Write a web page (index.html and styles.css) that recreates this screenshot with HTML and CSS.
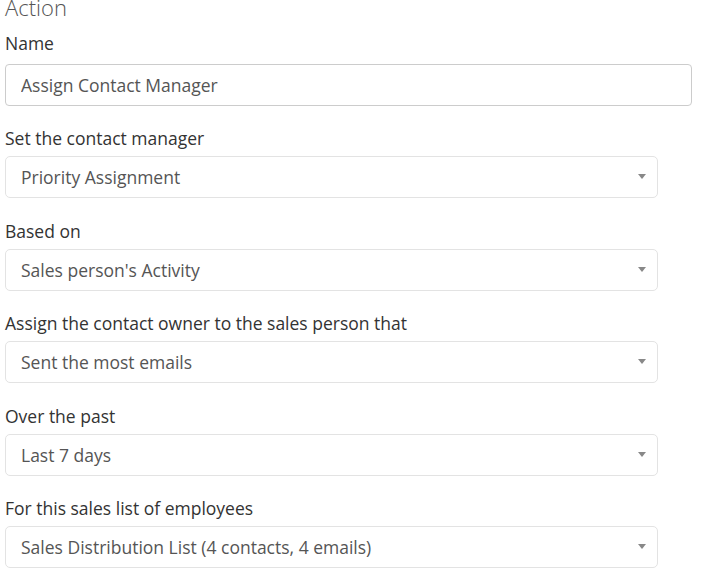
FILE: index.html
```html
<!DOCTYPE html>
<html lang="en">
<head>
  <meta charset="UTF-8" />
  <title>Action</title>
  <link rel="stylesheet" href="styles.css">
</head>
<body>

  <div class="action-form">
    <h3>Action</h3>

    <div class="field">
      <label for="name">Name</label>
      <input id="name" type="text" value="Assign Contact Manager" />
    </div>

    <div class="field">
      <label for="manager">Set the contact manager</label>
      <div class="select-wrap">
        <select id="manager">
          <option>Priority Assignment</option>
        </select>
        <span class="caret"></span>
      </div>
    </div>

    <div class="field">
      <label for="based">Based on</label>
      <div class="select-wrap">
        <select id="based">
          <option>Sales person's Activity</option>
        </select>
        <span class="caret"></span>
      </div>
    </div>

    <div class="field">
      <label for="owner">Assign the contact owner to the sales person that</label>
      <div class="select-wrap">
        <select id="owner">
          <option>Sent the most emails</option>
        </select>
        <span class="caret"></span>
      </div>
    </div>

    <div class="field">
      <label for="period">Over the past</label>
      <div class="select-wrap">
        <select id="period">
          <option>Last 7 days</option>
        </select>
        <span class="caret"></span>
      </div>
    </div>

    <div class="field">
      <label for="list">For this sales list of employees</label>
      <div class="select-wrap">
        <select id="list">
          <option>Sales Distribution List (4 contacts, 4 emails)</option>
        </select>
        <span class="caret"></span>
      </div>
    </div>
  </div>

</body>
</html>
```

FILE: styles.css
```css
body {
  margin: 0;
  background: #fff;
  font-family: 'Open Sans', sans-serif;
  color: #333;
  overflow: hidden;
}

.action-form {
  padding-left: 5px;
}

.action-form h3 {
  margin: -5px 0 12.5px;
  font-size: 22px;
  font-weight: 300;
  line-height: 1.1;
  color: #555;
}

.field {
  margin-bottom: 21.5px;
}

.field label {
  display: block;
  font-size: 17.5px;
  line-height: 22px;
  margin-bottom: 7px;
}

.field:first-of-type label {
  margin-bottom: 10px;
}

.field input,
.field select {
  box-sizing: border-box;
  display: block;
  height: 42px;
  margin: 0;
  padding: 0 15px;
  font-family: 'Open Sans', sans-serif;
  font-size: 17.5px;
  color: #555;
  background: #fff;
  outline: none;
}

.field input {
  width: 687px;
  border: 1px solid #ccc;
  border-radius: 4px;
}

.select-wrap {
  position: relative;
  width: 653px;
}

.field select {
  width: 100%;
  border: 1px solid #e3e3e3;
  border-radius: 5px;
  appearance: none;
  -webkit-appearance: none;
}

.caret {
  position: absolute;
  right: 12px;
  top: 18px;
  width: 0;
  height: 0;
  border-left: 4.5px solid transparent;
  border-right: 4.5px solid transparent;
  border-top: 5px solid #888;
}
```
